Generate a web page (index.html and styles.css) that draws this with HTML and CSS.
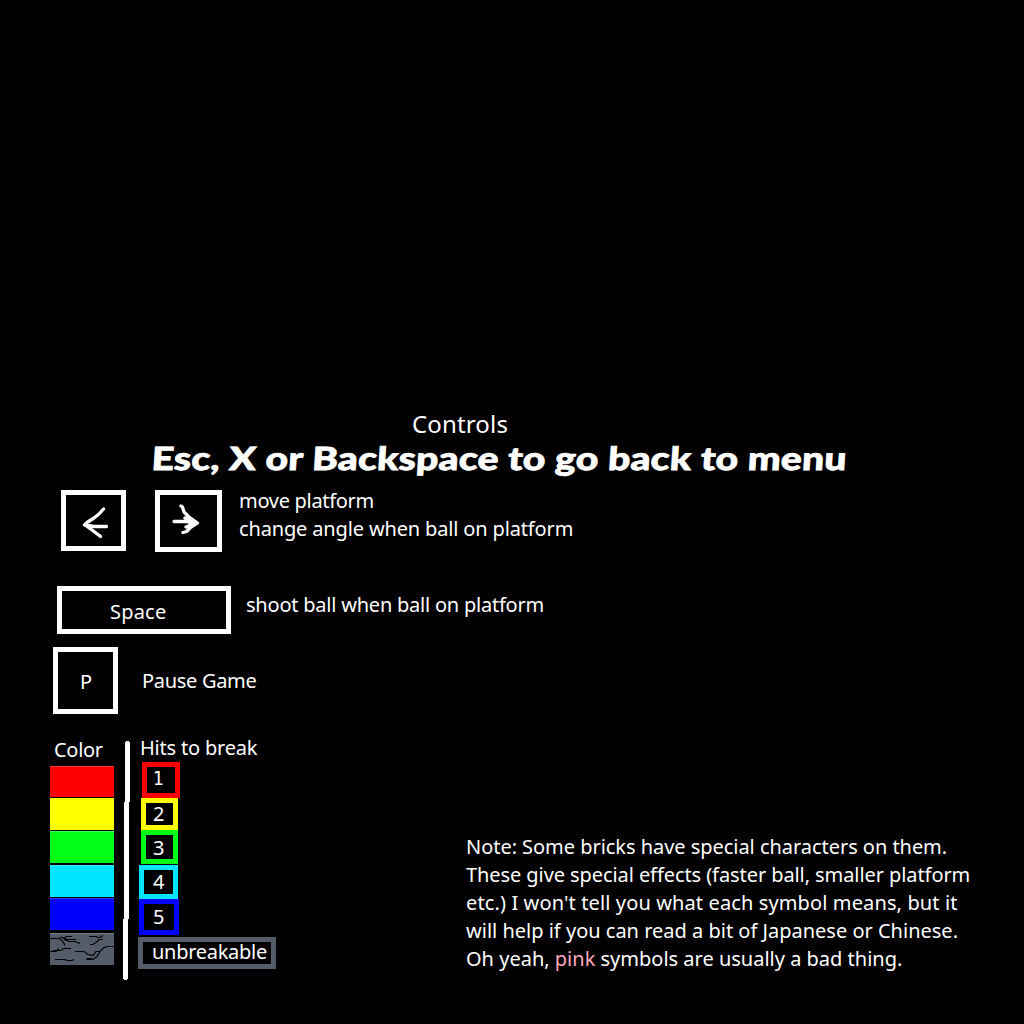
FILE: index.html
```html
<!DOCTYPE html>
<html lang="en">
<head>
<meta charset="utf-8">
<title>Controls</title>
<link rel="stylesheet" href="styles.css">
</head>
<body>
<main class="screen">
  <header class="header">
    <h1 class="heading">Controls</h1>
    <p class="hint">Esc, X or Backspace to go back to menu</p>
  </header>

  <section class="row row-move">
    <div class="key key-left">
      <svg width="55" height="51" viewBox="66 495 55 51"><path d="M103.5 509 L99 514 L94 518 L87 522.5 L84.5 525 L94 526.5 H106.5 M85 525 L92 530 L96 533 L100.5 536.5"/></svg>
    </div>
    <div class="key key-right">
      <svg width="57" height="52" viewBox="160 495 57 52"><path d="M181 506 L182.5 507 L184 512 L189 517 L197.5 523 L190 528 L186.500 531.5 L183 532.5 M174 521.5 H186 L197 523 M185 518 L196 523 L186 527 M187 521 L192 524"/></svg>
    </div>
    <div class="text text-move"><p class="t-move">move platform</p><p class="t-angle">change angle when ball on platform</p></div>
  </section>

  <section class="row row-space">
    <div class="key key-space">Space</div>
    <p class="text text-shoot">shoot ball when ball on platform</p>
  </section>

  <section class="row row-pause">
    <div class="key key-p">P</div>
    <p class="text text-pause">Pause Game</p>
  </section>

  <section class="row row-legend">
    <div class="colors">
      <h2 class="label t-color">Color</h2>
      <div class="swatch red"></div>
      <div class="swatch yellow"></div>
      <div class="swatch green"></div>
      <div class="swatch cyan"></div>
      <div class="swatch blue"></div>
      <div class="swatch stone">
        <svg width="64" height="32" viewBox="0 0 64 32"><path d="M0 5.500H9L11 4.500H15L17 3.500H22M9 5.500L12 7.500L14 10.500L15 12.500M12 4.500L17 6.500H26M14 6.500L19 8.500H25L30 10.500M39 3.500H46L48 4.500H50L53 2.500M53 6.500H49L46 9.500L43 11.500H40M0 18.500H6L9 15.500M3 17.500H11L14 15.500H21M25 18.500H34L38 21.500L43 22.500L46 18.500H50L54 14.500L58 13.500H64M50 18.500L47 23.500L43 26.500H37V25.500H42M5 26.500H14L18 27.500H22L24 26.500"/></svg>
      </div>
    </div>
    <svg class="divider" width="8" height="240" viewBox="0 0 8 240" shape-rendering="crispEdges"><path d="M3 0H6V1H7V61H6V178H5V238H4V239H1V238H0V178H1V61H2V1H3Z"/></svg>
    <div class="hits">
      <h2 class="label t-hits">Hits to break</h2>
      <div class="hit hit-1">1</div>
      <div class="hit hit-2">2</div>
      <div class="hit hit-3">3</div>
      <div class="hit hit-4">4</div>
      <div class="hit hit-5">5</div>
      <div class="hit hit-x">unbreakable</div>
    </div>
    <div class="note">
      <p class="n1">Note: Some bricks have special characters on them.</p>
      <p class="n2">These give special effects (faster ball, smaller platform</p>
      <p class="n3">etc.) I won't tell you what each symbol means, but it</p>
      <p class="n4">will help if you can read a bit of Japanese or Chinese.</p>
      <p class="n5">Oh yeah, <span class="pink">pink</span> symbols are usually a bad thing.</p>
    </div>
  </section>
</main>
</body>
</html>
```
FILE: styles.css
```css
* { box-sizing: border-box; margin: 0; padding: 0; }
body { background: #000; color: #fff; font: 400 20px/28px "Noto Sans", sans-serif; }
.screen { width: 1024px; height: 1024px; padding-top: 410px; overflow: hidden; }
p, h1, h2 { font-size: 20px; font-weight: 400; white-space: nowrap; }
svg { display: block; }

.heading { margin-left: 412px; font-size: 24px; line-height: 28px; letter-spacing: 0.15px; }
.hint { margin-left: 151px; width: max-content; font: 900 32px/40px Lato, sans-serif; letter-spacing: 0.17px; -webkit-text-stroke: 0.8px #fff; transform-origin: 0 80%; transform: scaleX(1.22) skewX(-3deg); }

.row { display: flex; align-items: flex-start; }
.key { flex: none; border: 5px solid #fff; }
.key path { fill: none; stroke: #fff; stroke-width: 3.3; stroke-linecap: round; stroke-linejoin: round; }

.row-move { margin-top: 12px; padding-left: 61px; height: 96px; }
.key-left { width: 65px; height: 61px; }
.key-right { width: 67px; height: 62px; margin-left: 29px; }
.text-move { margin: -3px 0 0 17px; }
.t-move { letter-spacing: -0.3px; }
.t-angle { letter-spacing: -0.15px; }

.row-space { padding-left: 57px; height: 61px; }
.key-space { width: 174px; height: 48px; padding: 7px 0 0 48px; letter-spacing: 0.2px; }
.text-shoot { margin: 5px 0 0 15px; letter-spacing: -0.22px; }

.row-pause { padding-left: 53px; height: 67px; }
.key-p { width: 65px; height: 67px; padding: 16px 0 0 22px; }
.text-pause { margin: 20px 0 0 24px; letter-spacing: -0.3px; }

.row-legend { padding-left: 50px; }
.colors { width: 64px; padding-top: 22px; }
.t-color { margin: 0 0 2px 4px; letter-spacing: -0.3px; }
.swatch { height: 32px; margin-bottom: 1px; border-top: 1px solid; }
.red { height: 31px; background: #f00; border-color: #f33; }
.yellow { background: #ff0; border-color: #ff0; }
.green { background: #00ff15; border-color: #3f5; margin-bottom: 2px; }
.cyan { background: #00e5ff; border-color: #33eaff; }
.blue { background: #0000ff; border-color: #33f; margin-bottom: 3px; }
.stone { background: #555c69; border-color: #777d87; }
.stone svg { margin-top: -1px; }
.stone path { fill: none; stroke: #000; stroke-width: 1.2; }

.divider { margin: 27px 0 0 9px; fill: #fff; }

.hits { width: 138px; margin-left: 7px; padding-top: 20px; }
.t-hits { margin: 0 0 0 2px; letter-spacing: -0.2px; }
.hit { border: 5px solid; }
.hit-1 { width: 38px; height: 36px; margin-left: 4px; padding-left: 6px; border-color: #f00; font-family: "DejaVu Sans Condensed", "DejaVu Sans", sans-serif; font-size: 19px; line-height: 23px; }
.hit-2 { width: 37px; height: 32px; margin-left: 3px; padding-left: 7px; border-color: #ff0; line-height: 22px; }
.hit-3 { width: 37px; height: 34px; margin-left: 3px; padding-left: 7px; border-color: #00ff15; line-height: 26px; }
.hit-4 { width: 39px; height: 34px; margin: 1px 0 0 1px; padding-left: 9px; border-color: #00e5ff; line-height: 24px; }
.hit-5 { width: 40px; height: 36px; margin-left: 1px; padding-left: 9px; border-color: #00f; line-height: 26px; }
.hit-x { width: 138px; height: 32px; margin-top: 2px; padding-left: 9px; border-color: #555c69; line-height: 20px; letter-spacing: -0.28px; }

.note { margin: 119px 0 0 190px; }
.n1 { letter-spacing: -0.04px; }
.n2 { letter-spacing: -0.08px; }
.n3 { letter-spacing: 0.12px; }
.pink { color: #ffa8bd; }
```
